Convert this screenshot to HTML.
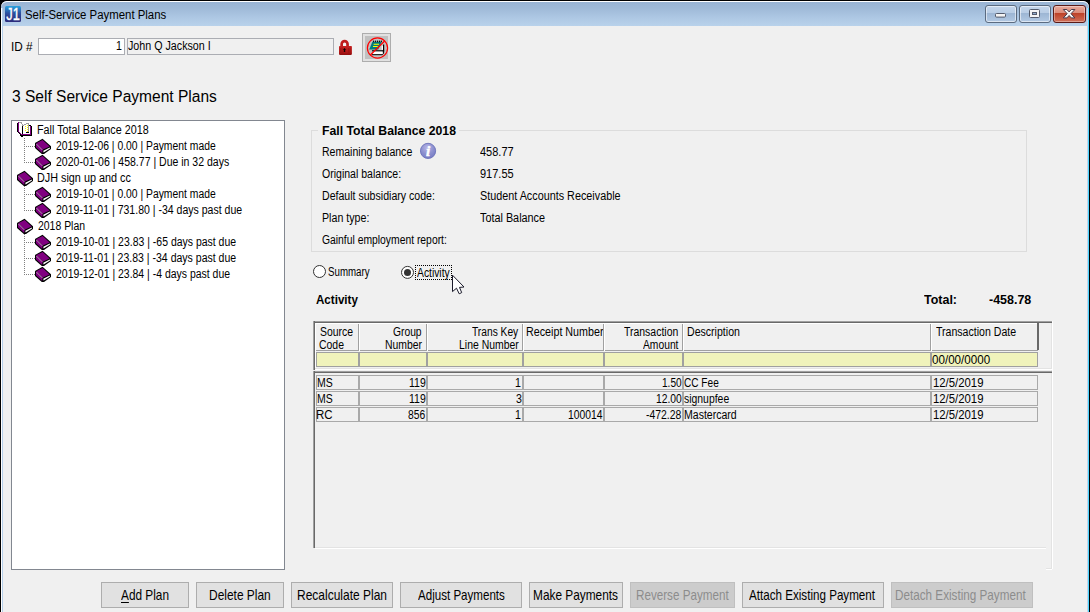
<!DOCTYPE html>
<html lang="en">
<head>
<meta charset="utf-8">
<title>Self-Service Payment Plans</title>
<style>
html,body{margin:0;padding:0;}
body{width:1090px;height:612px;overflow:hidden;position:relative;background:#000;
  font-family:"Liberation Sans",sans-serif;font-size:12.5px;color:#000;}
.abs,.t,.box{position:absolute;}
.t{white-space:nowrap;line-height:16px;height:16px;transform-origin:0 50%;}
/* window chrome */
#frame{left:0;top:0;width:1090px;height:640px;box-sizing:border-box;border:1px solid #000;border-radius:7px 7px 0 0;}
#titlebar{left:1px;top:1px;width:1088px;height:25px;border-radius:6px 6px 0 0;
  background:linear-gradient(#98b3d3 0,#9fbad8 30%,#adc7e3 65%,#b9d2eb 100%);box-shadow:inset 0 1px 0 #fff;}
#bl1{left:1px;top:8px;width:1px;height:610px;background:#fff;}
#bl2{left:2px;top:8px;width:1px;height:610px;background:#b5cfea;}
#br1{left:1087px;top:8px;width:1px;height:610px;background:#c5d5ea;}
#br2{left:1088px;top:8px;width:1px;height:610px;background:#4cd6ff;}
#client{left:3px;top:26px;width:1084px;height:590px;background:#f0f0f0;}
.cap{top:5px;height:16px;width:30px;border:1px solid #5b6b80;border-radius:3px;
  background:linear-gradient(#c4d6eb 0,#b9cde5 43%,#9db6d4 46%,#b2c9e3 100%);box-shadow:inset 0 0 0 1px rgba(255,255,255,.55);}
#cclose{border-color:#5a1a17;background:linear-gradient(#e8aa9d 0,#db8b79 43%,#bd4128 46%,#d0705a 100%);box-shadow:inset 0 0 0 1px rgba(255,255,255,.35);}
/* fields */
.inp{box-sizing:border-box;border:1px solid #abadb3;background:#fff;}
.ro{box-sizing:border-box;border:1px solid #abadb3;background:#f0f0f0;}
/* buttons */
.btn{top:582px;height:26px;box-sizing:border-box;border:1px solid #adadad;background:#e1e1e1;text-align:center;}
.btn.dis{background:#cccccc;border-color:#bfbfbf;color:#8a8a8a;}
/* grid */
.ycell{top:352px;height:15px;box-sizing:border-box;border:1px solid #a0a0a0;background:#f0f3bb;}
.hsep{top:324px;width:1px;height:27px;background:#a0a0a0;box-shadow:1px 0 0 #fff;}
.dcell{height:15px;box-sizing:border-box;border:1px solid #a9a9a9;background:#f0f0f0;}
.clipR{}
</style>
</head>
<body>
<!-- ===== window frame ===== -->
<div class="abs" id="frame"></div>
<div class="abs" id="titlebar"></div>
<div class="abs" id="bl1"></div><div class="abs" id="bl2"></div>
<div class="abs" id="br1"></div><div class="abs" id="br2"></div>
<div class="abs" id="client"></div>

<!-- app icon -->
<svg class="abs" style="left:5px;top:6px" width="16" height="16" viewBox="0 0 16 16">
  <defs><linearGradient id="j1g" x1="0" y1="0" x2="0" y2="1"><stop offset="0" stop-color="#2aa3df"/><stop offset=".45" stop-color="#2c4f9e"/><stop offset="1" stop-color="#2c2a7a"/></linearGradient></defs>
  <rect x="0" y="0" width="16" height="16" rx="1.5" fill="url(#j1g)"/>
  <text x="1.2" y="13.7" font-family="Liberation Sans, sans-serif" font-size="16.6" fill="#fff" stroke="#fff" stroke-width=".35" textLength="13.6" lengthAdjust="spacingAndGlyphs">J1</text>
</svg>

<!-- caption buttons -->
<div class="abs cap" style="left:985px"></div>
<div class="abs cap" style="left:1019px"></div>
<div class="abs cap" id="cclose" style="left:1053px;width:31px"></div>
<svg class="abs" style="left:985px;top:5px" width="100" height="18" viewBox="0 0 100 18">
  <rect x="10.5" y="8.5" width="10" height="3.6" rx="1" fill="#f4f4f4" stroke="#545b6b"/>
  <rect x="44.5" y="4.5" width="10" height="8" rx="1" fill="#f4f4f4" stroke="#545b6b"/>
  <rect x="47.5" y="7.5" width="4" height="2" fill="#8fa9cb" stroke="#545b6b"/>
  <path d="M78.3 4.5 h3.6 l2.2 2.4 l2.2 -2.4 h3.6 l-3.9 4.2 l3.9 4.2 h-3.6 l-2.2 -2.4 l-2.2 2.4 h-3.6 l3.9 -4.2 z" fill="#f6f6f6" stroke="#4a3a4a" stroke-width="1" stroke-linejoin="round"/>
</svg>

<!-- ===== ID row ===== -->
<div class="abs inp" style="left:38px;top:38px;width:87px;height:17px"></div>
<div class="abs ro"  style="left:127px;top:38px;width:207px;height:17px"></div>
<!-- lock -->
<svg class="abs" style="left:338px;top:39px" width="16" height="17" viewBox="0 0 16 17">
  <defs><linearGradient id="lkg" x1="0" y1="0" x2="0" y2="1"><stop offset="0" stop-color="#c62222"/><stop offset=".7" stop-color="#b01616"/><stop offset="1" stop-color="#8e0e0e"/></linearGradient></defs>
  <path d="M3.65 8 V5.1 a2.95 2.95 0 0 1 5.9 0 V8" fill="none" stroke="#c01c1c" stroke-width="2.7"/>
  <rect x="1" y="6.9" width="12.9" height="9" rx=".8" fill="url(#lkg)"/>
  <path d="M2.5 9v5M4 8.5v6M10.5 9v5.5M12 8.5v6" stroke="#9a1212" stroke-width=".7"/>
  <path d="M6.5 9 l1.7 1.7 h-1 v2.2 h-1.4 v-2.2 h-1z" fill="#140303"/>
</svg>
<!-- notepad-disabled button -->
<div class="abs" style="left:362px;top:33px;width:29px;height:29px;box-sizing:border-box;border:1px solid #adadad;background:#e1e1e1"></div>
<div class="abs" style="left:365px;top:36px;width:23px;height:23px;background:#c0c0c0"></div>
<svg class="abs" style="left:365px;top:36px" width="24" height="24" viewBox="0 0 24 24">
  <path d="M7 14.9 H18.6 V8.4" fill="none" stroke="#000" stroke-width="1.2"/>
  <rect x="7.6" y="15.6" width="9.8" height="2.6" fill="#fff"/>
  <path d="M7 18.7 H17.4 L18.6 17.4 V14" fill="none" stroke="#000" stroke-width="1"/>
  <rect x="16.7" y="9.8" width="1.3" height="4" fill="#fff"/>
  <path d="M7.4 5.8 H16.8 L13.2 13.5 H4.2Z" fill="#007c7c"/>
  <path d="M8.6 4.6v1.6M10.6 4.6v1.6M12.6 4.6v1.6M14.6 4.6v1.6M16.4 4.6v1.6" stroke="#000" stroke-width="1"/>
  <path d="M8.6 8.3 h5.4 M8 10.5 h4.8" stroke="#ffff00" stroke-width="1.1"/>
  <circle cx="12.5" cy="12" r="10.1" fill="none" stroke="#ff0000" stroke-width="1.2"/>
  <path d="M5.4 19 L19.6 5" stroke="#ff0000" stroke-width="1.3"/>
</svg>

<!-- ===== tree panel ===== -->
<div class="abs" style="left:11px;top:120px;width:274px;height:450px;box-sizing:border-box;border:1px solid #828790;background:#fff"></div>
<svg class="abs" style="left:12px;top:121px" width="272" height="170" viewBox="12 121 272 170" shape-rendering="crispEdges">
  <defs>
    <g id="bk">
      <path d="M0 4 L7.5 -0.3 L16 7.3 L16 10 L9 15 L6.8 15 L0 9Z" fill="#000"/>
      <path d="M1.2 4.3 L7.6 0.9 L14.6 7.4 L8 10.6Z" fill="#800080"/>
      <path d="M1 4.4 L7.6 10.6 L7.2 13.9 L1 8.2Z" fill="#800080"/>
      <path d="M1.4 4.9 L7.4 10.9" stroke="#f4e6f4" stroke-width="1" stroke-dasharray="1 .4" fill="none"/>
      <path d="M8.3 11.7 L14.8 8.5 L15 9.4 L8.6 13.6Z" fill="#fff"/>
    </g>
    <g id="obk" shape-rendering="crispEdges"><rect x="1" y="0" width="1" height="1" fill="#800080"/><rect x="2" y="0" width="3" height="1" fill="#a0a0a0"/><rect x="0" y="1" width="1" height="1" fill="#000"/><rect x="1" y="1" width="1" height="1" fill="#800080"/><rect x="2" y="1" width="2" height="1" fill="#fff"/><rect x="4" y="1" width="1" height="1" fill="#a0a0a0"/><rect x="9" y="1" width="3" height="1" fill="#a0a0a0"/><rect x="0" y="2" width="1" height="1" fill="#000"/><rect x="1" y="2" width="1" height="1" fill="#800080"/><rect x="2" y="2" width="3" height="1" fill="#fff"/><rect x="5" y="2" width="1" height="1" fill="#a0a0a0"/><rect x="7" y="2" width="2" height="1" fill="#a0a0a0"/><rect x="9" y="2" width="2" height="1" fill="#fff"/><rect x="11" y="2" width="1" height="1" fill="#a0a0a0"/><rect x="0" y="3" width="1" height="1" fill="#000"/><rect x="1" y="3" width="1" height="1" fill="#800080"/><rect x="2" y="3" width="3" height="1" fill="#fff"/><rect x="5" y="3" width="2" height="1" fill="#a0a0a0"/><rect x="7" y="3" width="3" height="1" fill="#fff"/><rect x="10" y="3" width="1" height="1" fill="#ffff00"/><rect x="11" y="3" width="1" height="1" fill="#a0a0a0"/><rect x="12" y="3" width="2" height="1" fill="#000"/><rect x="0" y="4" width="1" height="1" fill="#000"/><rect x="1" y="4" width="1" height="1" fill="#800080"/><rect x="2" y="4" width="3" height="1" fill="#fff"/><rect x="5" y="4" width="1" height="1" fill="#000"/><rect x="6" y="4" width="2" height="1" fill="#fff"/><rect x="8" y="4" width="1" height="1" fill="#ffff00"/><rect x="9" y="4" width="2" height="1" fill="#fff"/><rect x="11" y="4" width="1" height="1" fill="#a0a0a0"/><rect x="12" y="4" width="1" height="1" fill="#fff"/><rect x="13" y="4" width="1" height="1" fill="#800080"/><rect x="14" y="4" width="1" height="1" fill="#000"/><rect x="0" y="5" width="1" height="1" fill="#000"/><rect x="1" y="5" width="1" height="1" fill="#800080"/><rect x="2" y="5" width="3" height="1" fill="#fff"/><rect x="5" y="5" width="1" height="1" fill="#000"/><rect x="6" y="5" width="4" height="1" fill="#fff"/><rect x="10" y="5" width="1" height="1" fill="#ffff00"/><rect x="11" y="5" width="1" height="1" fill="#a0a0a0"/><rect x="12" y="5" width="1" height="1" fill="#fff"/><rect x="13" y="5" width="1" height="1" fill="#800080"/><rect x="14" y="5" width="1" height="1" fill="#000"/><rect x="0" y="6" width="1" height="1" fill="#000"/><rect x="1" y="6" width="1" height="1" fill="#800080"/><rect x="2" y="6" width="3" height="1" fill="#fff"/><rect x="5" y="6" width="1" height="1" fill="#000"/><rect x="6" y="6" width="2" height="1" fill="#fff"/><rect x="8" y="6" width="1" height="1" fill="#ffff00"/><rect x="9" y="6" width="2" height="1" fill="#fff"/><rect x="11" y="6" width="1" height="1" fill="#a0a0a0"/><rect x="12" y="6" width="1" height="1" fill="#fff"/><rect x="13" y="6" width="1" height="1" fill="#800080"/><rect x="14" y="6" width="1" height="1" fill="#000"/><rect x="0" y="7" width="1" height="1" fill="#000"/><rect x="1" y="7" width="1" height="1" fill="#800080"/><rect x="2" y="7" width="3" height="1" fill="#fff"/><rect x="5" y="7" width="1" height="1" fill="#000"/><rect x="6" y="7" width="4" height="1" fill="#fff"/><rect x="10" y="7" width="1" height="1" fill="#ffff00"/><rect x="11" y="7" width="1" height="1" fill="#a0a0a0"/><rect x="12" y="7" width="1" height="1" fill="#fff"/><rect x="13" y="7" width="1" height="1" fill="#800080"/><rect x="14" y="7" width="1" height="1" fill="#000"/><rect x="0" y="8" width="1" height="1" fill="#000"/><rect x="1" y="8" width="1" height="1" fill="#800080"/><rect x="2" y="8" width="3" height="1" fill="#fff"/><rect x="5" y="8" width="1" height="1" fill="#000"/><rect x="6" y="8" width="2" height="1" fill="#fff"/><rect x="8" y="8" width="1" height="1" fill="#ffff00"/><rect x="9" y="8" width="2" height="1" fill="#fff"/><rect x="11" y="8" width="1" height="1" fill="#a0a0a0"/><rect x="12" y="8" width="1" height="1" fill="#fff"/><rect x="13" y="8" width="1" height="1" fill="#800080"/><rect x="14" y="8" width="1" height="1" fill="#000"/><rect x="0" y="9" width="1" height="1" fill="#000"/><rect x="1" y="9" width="1" height="1" fill="#800080"/><rect x="2" y="9" width="3" height="1" fill="#fff"/><rect x="5" y="9" width="1" height="1" fill="#000"/><rect x="6" y="9" width="4" height="1" fill="#fff"/><rect x="10" y="9" width="1" height="1" fill="#ffff00"/><rect x="11" y="9" width="1" height="1" fill="#a0a0a0"/><rect x="12" y="9" width="1" height="1" fill="#fff"/><rect x="13" y="9" width="1" height="1" fill="#800080"/><rect x="14" y="9" width="1" height="1" fill="#000"/><rect x="1" y="10" width="1" height="1" fill="#000"/><rect x="2" y="10" width="1" height="1" fill="#800080"/><rect x="3" y="10" width="2" height="1" fill="#fff"/><rect x="5" y="10" width="1" height="1" fill="#000"/><rect x="6" y="10" width="3" height="1" fill="#fff"/><rect x="9" y="10" width="3" height="1" fill="#000"/><rect x="12" y="10" width="1" height="1" fill="#fff"/><rect x="13" y="10" width="1" height="1" fill="#800080"/><rect x="14" y="10" width="1" height="1" fill="#000"/><rect x="2" y="11" width="1" height="1" fill="#000"/><rect x="3" y="11" width="1" height="1" fill="#800080"/><rect x="4" y="11" width="1" height="1" fill="#fff"/><rect x="5" y="11" width="1" height="1" fill="#000"/><rect x="6" y="11" width="7" height="1" fill="#fff"/><rect x="13" y="11" width="1" height="1" fill="#800080"/><rect x="14" y="11" width="1" height="1" fill="#000"/><rect x="3" y="12" width="1" height="1" fill="#000"/><rect x="4" y="12" width="10" height="1" fill="#800080"/><rect x="14" y="12" width="1" height="1" fill="#000"/><rect x="3" y="13" width="12" height="1" fill="#000"/><rect x="4" y="14" width="2" height="1" fill="#000"/></g>
  </defs>
  <!-- dotted connectors -->
  <g stroke="#808080" stroke-width="1" stroke-dasharray="1 1" fill="none">
    <path d="M24.5 138 V163 M24 146.5 H35 M24 162.5 H35"/>
    <path d="M24.5 186 V211 M24 194.5 H35 M24 210.5 H35"/>
    <path d="M24.5 234 V275 M24 242.5 H35 M24 258.5 H35 M24 274.5 H35"/>
  </g>
  <g shape-rendering="geometricPrecision">
  <use href="#obk" x="17" y="122"/>
  <use href="#bk" x="35" y="139"/><use href="#bk" x="35" y="155"/>
  <use href="#bk" x="17" y="171"/>
  <use href="#bk" x="35" y="187"/><use href="#bk" x="35" y="203"/>
  <use href="#bk" x="17" y="219"/>
  <use href="#bk" x="35" y="235"/><use href="#bk" x="35" y="251"/><use href="#bk" x="35" y="267"/>
  </g>
</svg>

<!-- ===== group box ===== -->
<div class="abs" style="left:311px;top:130px;width:716px;height:122px;box-sizing:border-box;border:1px solid #dcdcdc"></div>
<div class="abs" style="left:318px;top:126px;width:141px;height:10px;background:#f0f0f0"></div>
<!-- info icon -->
<svg class="abs" style="left:419px;top:142px" width="18" height="18" viewBox="0 0 18 18">
  <defs><radialGradient id="ig" cx=".45" cy=".3" r=".75"><stop offset="0" stop-color="#b9b6e6"/><stop offset=".55" stop-color="#8c90cf"/><stop offset="1" stop-color="#7479c2"/></radialGradient></defs>
  <circle cx="9.05" cy="8.9" r="7.6" fill="url(#ig)" stroke="#6b72ba" stroke-width=".9"/>
  <text x="9.2" y="13.8" text-anchor="middle" font-family="Liberation Serif, serif" font-style="italic" font-weight="700" font-size="15" fill="#fff" stroke="#fff" stroke-width=".5">i</text>
</svg>

<!-- ===== radios ===== -->
<svg class="abs" style="left:312px;top:265px" width="104" height="16" viewBox="0 0 104 16">
  <circle cx="7.5" cy="6.5" r="6" fill="#fff" stroke="#333" stroke-width="1"/>
  <circle cx="95.5" cy="7.4" r="6" fill="#fff" stroke="#333" stroke-width="1"/>
  <circle cx="95.5" cy="7.4" r="3.5" fill="#333"/>
</svg>
<div class="abs" style="left:415px;top:265px;width:37px;height:15px;box-sizing:border-box;border:1px dotted #000"></div>
<!-- mouse cursor -->
<svg class="abs" style="left:451px;top:274px" width="14" height="21" viewBox="0 0 14 21">
  <path d="M1.5 1.2 V17.6 L5.5 14.2 L8.2 19.8 L10.7 18.6 L8.5 13.4 L13 13 Z" fill="#fff" stroke="#1a1a2a" stroke-width="1" stroke-linejoin="miter"/>
</svg>

<!-- ===== grid ===== -->
<!-- outer faint frame -->
<div class="abs" style="left:1051px;top:321px;width:1px;height:248px;background:#e3e3e3;box-shadow:1px 0 0 #fff"></div>
<div class="abs" style="left:1046px;top:568px;width:6px;height:1px;background:#e3e3e3;box-shadow:0 1px 0 #fff"></div>
<!-- top section (header + filter) -->
<div class="abs" style="left:313px;top:321px;width:739px;height:2px;background:#696969;box-shadow:inset 0 1px 0 #a0a0a0"></div>
<div class="abs" style="left:313px;top:321px;width:2px;height:49px;background:#696969;box-shadow:inset 1px 0 0 #a0a0a0"></div>
<div class="abs" style="left:315px;top:323px;width:723px;height:1px;background:#fff"></div>
<div class="abs" style="left:315px;top:323px;width:1px;height:45px;background:#fff"></div>
<div class="abs" style="left:315px;top:368px;width:737px;height:1px;background:#e3e3e3;box-shadow:0 1px 0 #fff"></div>
<div class="abs" style="left:316px;top:350px;width:722px;height:1px;background:#a0a0a0"></div>
<div class="abs" style="left:1037px;top:323px;width:2px;height:27px;background:#696969"></div>
<div class="abs hsep" style="left:358px"></div><div class="abs hsep" style="left:426px"></div>
<div class="abs hsep" style="left:522px"></div><div class="abs hsep" style="left:603px"></div>
<div class="abs hsep" style="left:682px"></div><div class="abs hsep" style="left:930px"></div>
<!-- filter row -->
<div class="abs ycell" style="left:316px;width:43px"></div>
<div class="abs ycell" style="left:359px;width:68px"></div>
<div class="abs ycell" style="left:427px;width:96px"></div>
<div class="abs ycell" style="left:523px;width:81px"></div>
<div class="abs ycell" style="left:604px;width:79px"></div>
<div class="abs ycell" style="left:683px;width:248px"></div>
<div class="abs ycell" style="left:931px;width:107px"></div>
<!-- data section -->
<div class="abs" style="left:313px;top:371px;width:739px;height:2px;background:#696969;box-shadow:inset 0 1px 0 #a0a0a0"></div>
<div class="abs" style="left:313px;top:371px;width:2px;height:177px;background:#696969;box-shadow:inset 1px 0 0 #a0a0a0"></div>
<div class="abs" style="left:315px;top:547px;width:731px;height:1px;background:#e3e3e3;box-shadow:0 1px 0 #fff"></div>
<div class="abs dcell" style="left:316px;top:375px;width:43px"></div><div class="abs dcell" style="left:359px;top:375px;width:68px"></div><div class="abs dcell" style="left:427px;top:375px;width:96px"></div><div class="abs dcell" style="left:523px;top:375px;width:81px"></div><div class="abs dcell" style="left:604px;top:375px;width:79px"></div><div class="abs dcell" style="left:683px;top:375px;width:248px"></div><div class="abs dcell" style="left:931px;top:375px;width:107px"></div>
<div class="abs dcell" style="left:316px;top:391px;width:43px"></div><div class="abs dcell" style="left:359px;top:391px;width:68px"></div><div class="abs dcell" style="left:427px;top:391px;width:96px"></div><div class="abs dcell" style="left:523px;top:391px;width:81px"></div><div class="abs dcell" style="left:604px;top:391px;width:79px"></div><div class="abs dcell" style="left:683px;top:391px;width:248px"></div><div class="abs dcell" style="left:931px;top:391px;width:107px"></div>
<div class="abs dcell" style="left:316px;top:407px;width:43px"></div><div class="abs dcell" style="left:359px;top:407px;width:68px"></div><div class="abs dcell" style="left:427px;top:407px;width:96px"></div><div class="abs dcell" style="left:523px;top:407px;width:81px"></div><div class="abs dcell" style="left:604px;top:407px;width:79px"></div><div class="abs dcell" style="left:683px;top:407px;width:248px"></div><div class="abs dcell" style="left:931px;top:407px;width:107px"></div>


<!-- ===== bottom buttons ===== -->
<div class="abs btn" style="left:101px;width:88px"></div>
<div class="abs btn" style="left:196px;width:88px"></div>
<div class="abs btn" style="left:291px;width:102px"></div>
<div class="abs btn" style="left:400px;width:122px"></div>
<div class="abs btn" style="left:529px;width:94px"></div>
<div class="abs btn dis" style="left:630px;width:105px"></div>
<div class="abs btn" style="left:742px;width:142px"></div>
<div class="abs btn dis" style="left:891px;width:142px"></div>


<!-- ===== all text ===== -->
<span class="t" style="left:25.30px;top:6.67px;transform:scaleX(0.9116);">Self-Service Payment Plans</span>
<span class="t" style="left:11.46px;top:38.67px;transform:scaleX(0.9409);">ID #</span>
<span class="t" style="left:116.45px;top:37.67px;transform:scaleX(0.8500);">1</span>
<span class="t" style="left:128.00px;top:37.67px;transform:scaleX(0.8562);">John Q Jackson I</span>
<span class="t" style="left:11.60px;top:86.46px;transform:scaleX(0.9720);font-size:16px;line-height:22px;height:22px;">3 Self Service Payment Plans</span>
<span class="t" style="left:36.84px;top:121.67px;transform:scaleX(0.8605);">Fall Total Balance 2018</span>
<span class="t" style="left:56.20px;top:137.67px;transform:scaleX(0.8285);">2019-12-06 | 0.00 | Payment made</span>
<span class="t" style="left:56.20px;top:153.67px;transform:scaleX(0.8408);">2020-01-06 | 458.77 | Due in 32 days</span>
<span class="t" style="left:36.83px;top:169.67px;transform:scaleX(0.8654);">DJH sign up and cc</span>
<span class="t" style="left:56.20px;top:185.67px;transform:scaleX(0.8285);">2019-10-01 | 0.00 | Payment made</span>
<span class="t" style="left:56.20px;top:201.67px;transform:scaleX(0.8421);">2019-11-01 | 731.80 | -34 days past due</span>
<span class="t" style="left:37.70px;top:217.67px;transform:scaleX(0.8357);">2018 Plan</span>
<span class="t" style="left:56.20px;top:233.67px;transform:scaleX(0.8377);">2019-10-01 | 23.83 | -65 days past due</span>
<span class="t" style="left:56.20px;top:249.67px;transform:scaleX(0.8416);">2019-11-01 | 23.83 | -34 days past due</span>
<span class="t" style="left:56.20px;top:265.67px;transform:scaleX(0.8365);">2019-12-01 | 23.84 | -4 days past due</span>
<span class="t" style="left:321.80px;top:122.67px;transform:scaleX(0.9803);font-weight:700;">Fall Total Balance 2018</span>
<span class="t" style="left:321.76px;top:143.67px;transform:scaleX(0.8434);">Remaining balance</span>
<span class="t" style="left:321.80px;top:165.67px;transform:scaleX(0.8430);">Original balance:</span>
<span class="t" style="left:321.75px;top:187.67px;transform:scaleX(0.8462);">Default subsidiary code:</span>
<span class="t" style="left:321.75px;top:209.67px;transform:scaleX(0.8519);">Plan type:</span>
<span class="t" style="left:321.80px;top:231.67px;transform:scaleX(0.8280);">Gainful employment report:</span>
<span class="t" style="left:479.80px;top:143.67px;transform:scaleX(0.8789);">458.77</span>
<span class="t" style="left:479.80px;top:165.67px;transform:scaleX(0.8789);">917.55</span>
<span class="t" style="left:480.20px;top:187.67px;transform:scaleX(0.8644);">Student Accounts Receivable</span>
<span class="t" style="left:480.20px;top:209.67px;transform:scaleX(0.8667);">Total Balance</span>
<span class="t" style="left:328.40px;top:263.67px;transform:scaleX(0.7778);">Summary</span>
<span class="t" style="left:416.50px;top:264.67px;transform:scaleX(0.8250);">Activity</span>
<span class="t" style="left:316.20px;top:291.67px;transform:scaleX(0.9267);font-weight:700;">Activity</span>
<span class="t" style="left:923.90px;top:291.67px;transform:scaleX(0.9969);font-weight:700;">Total:</span>
<span class="t" style="left:989.20px;top:291.67px;transform:scaleX(0.9977);font-weight:700;">-458.78</span>
<span class="t" style="left:320.00px;top:323.67px;transform:scaleX(0.8350);">Source</span>
<span class="t" style="left:319.10px;top:336.67px;transform:scaleX(0.8367);">Code</span>
<span class="t" style="left:393.20px;top:323.67px;transform:scaleX(0.8229);">Group</span>
<span class="t" style="left:385.47px;top:336.67px;transform:scaleX(0.8341);">Number</span>
<span class="t" style="left:471.90px;top:323.67px;transform:scaleX(0.8175);">Trans Key</span>
<span class="t" style="left:458.86px;top:336.67px;transform:scaleX(0.8352);">Line Number</span>
<div class="abs" style="left:523px;top:0;width:80px;height:612px;overflow:hidden"><span class="t" style="left:3.24px;top:323.67px;transform:scaleX(0.8578);">Receipt Number</span></div>
<span class="t" style="left:623.90px;top:323.67px;transform:scaleX(0.8369);">Transaction</span>
<span class="t" style="left:642.90px;top:336.67px;transform:scaleX(0.8233);">Amount</span>
<span class="t" style="left:686.55px;top:323.67px;transform:scaleX(0.8459);">Description</span>
<span class="t" style="left:935.90px;top:323.67px;transform:scaleX(0.8453);">Transaction Date</span>
<span class="t" style="left:932.10px;top:351.67px;transform:scaleX(0.9290);">00/00/0000</span>
<span class="t" style="left:316.56px;top:374.67px;transform:scaleX(0.8389);">MS</span>
<span class="t" style="left:408.70px;top:374.67px;transform:scaleX(0.8400);">119</span>
<span class="t" style="left:515.15px;top:374.67px;transform:scaleX(0.8500);">1</span>
<span class="t" style="left:662.00px;top:374.67px;transform:scaleX(0.8083);">1.50</span>
<span class="t" style="left:683.60px;top:374.67px;transform:scaleX(0.8070);">CC Fee</span>
<span class="t" style="left:933.00px;top:374.67px;transform:scaleX(0.9071);">12/5/2019</span>
<span class="t" style="left:316.56px;top:390.67px;transform:scaleX(0.8389);">MS</span>
<span class="t" style="left:408.70px;top:390.67px;transform:scaleX(0.8400);">119</span>
<span class="t" style="left:515.55px;top:390.67px;transform:scaleX(0.8500);">3</span>
<span class="t" style="left:655.80px;top:390.67px;transform:scaleX(0.8258);">12.00</span>
<span class="t" style="left:684.00px;top:390.67px;transform:scaleX(0.8333);">signupfee</span>
<span class="t" style="left:933.00px;top:390.67px;transform:scaleX(0.9071);">12/5/2019</span>
<span class="t" style="left:316.48px;top:406.67px;transform:scaleX(0.9176);">RC</span>
<span class="t" style="left:408.20px;top:406.67px;transform:scaleX(0.8238);">856</span>
<span class="t" style="left:515.15px;top:406.67px;transform:scaleX(0.8500);">1</span>
<span class="t" style="left:567.80px;top:406.67px;transform:scaleX(0.8262);">100014</span>
<span class="t" style="left:646.40px;top:406.67px;transform:scaleX(0.8333);">-472.28</span>
<span class="t" style="left:683.66px;top:406.67px;transform:scaleX(0.8426);">Mastercard</span>
<span class="t" style="left:933.00px;top:406.67px;transform:scaleX(0.9071);">12/5/2019</span>
<span class="t" style="left:121.00px;top:587.24px;transform:scaleX(0.8600);font-size:13.75px;line-height:18px;height:18px;"><u style="text-underline-offset:2px">A</u>dd Plan</span>
<span class="t" style="left:208.63px;top:587.24px;transform:scaleX(0.8686);font-size:13.75px;line-height:18px;height:18px;">Delete Plan</span>
<span class="t" style="left:296.63px;top:587.24px;transform:scaleX(0.8725);font-size:13.75px;line-height:18px;height:18px;">Recalculate Plan</span>
<span class="t" style="left:417.50px;top:587.24px;transform:scaleX(0.8417);font-size:13.75px;line-height:18px;height:18px;">Adjust Payments</span>
<span class="t" style="left:532.84px;top:587.24px;transform:scaleX(0.8622);font-size:13.75px;line-height:18px;height:18px;">Make Payments</span>
<span class="t" style="left:635.65px;top:587.24px;transform:scaleX(0.8486);font-size:13.75px;line-height:18px;height:18px;color:#8c8c8c;">Reverse Payment</span>
<span class="t" style="left:749.20px;top:587.24px;transform:scaleX(0.8456);font-size:13.75px;line-height:18px;height:18px;">Attach Existing Payment</span>
<span class="t" style="left:895.45px;top:587.24px;transform:scaleX(0.8510);font-size:13.75px;line-height:18px;height:18px;color:#8c8c8c;">Detach Existing Payment</span>
</body>
</html>
